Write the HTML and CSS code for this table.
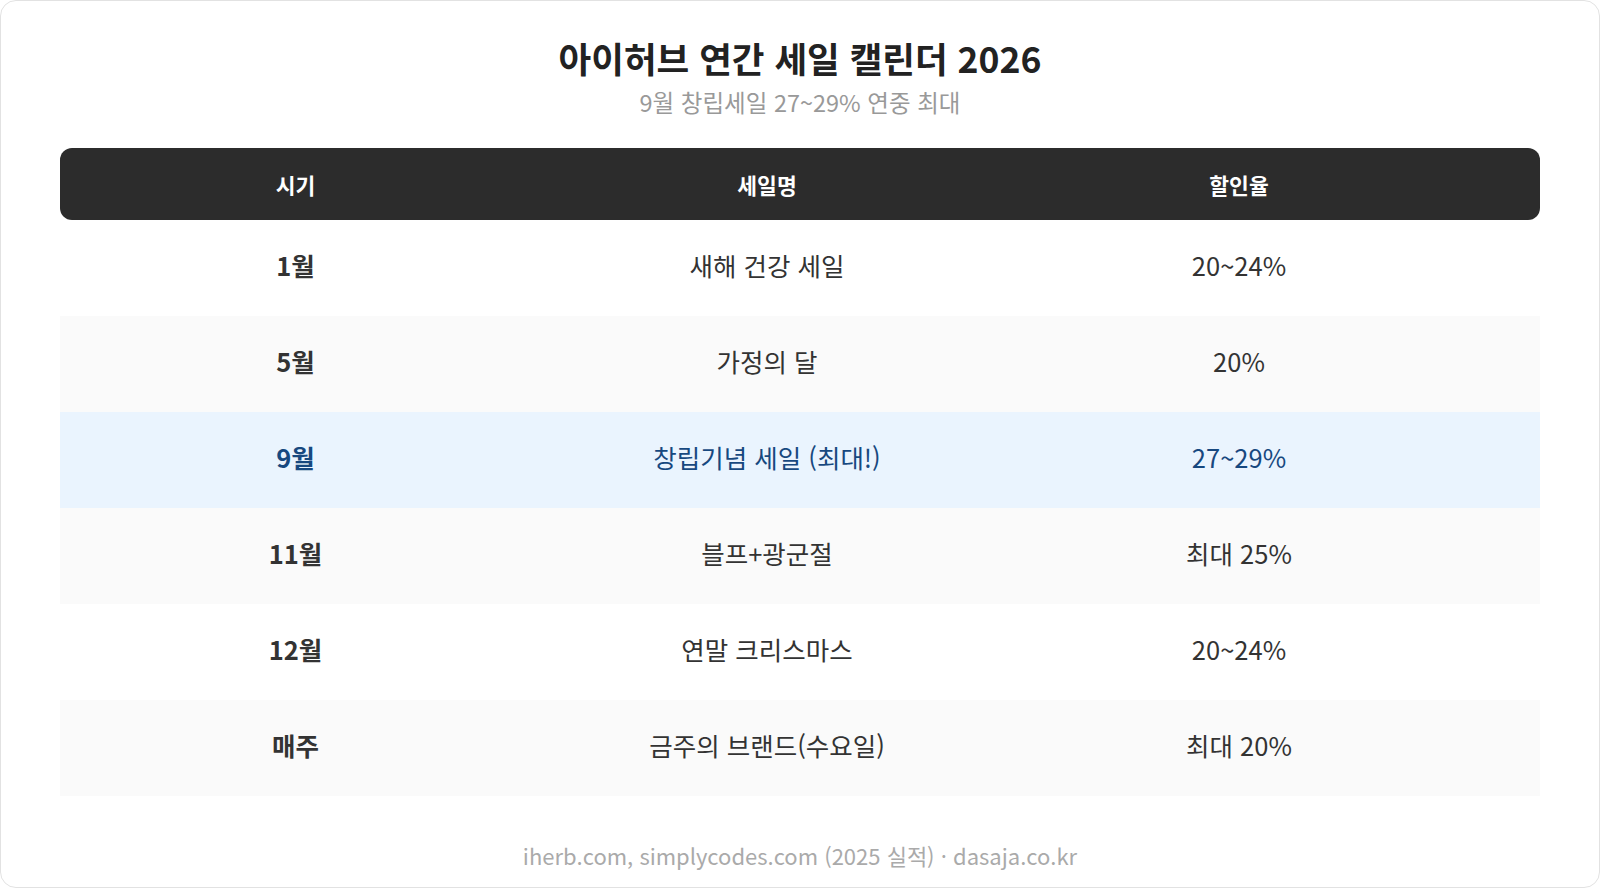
FILE: index.html
```html
<!DOCTYPE html>
<html lang="ko">
<head>
<meta charset="utf-8">
<title>아이허브 연간 세일 캘린더 2026</title>
<link rel="stylesheet" href="styles.css">
</head>
<body>
<div class="card">
  <h1 class="title">아이허브 연간 세일 캘린더 2026</h1>
  <p class="subtitle">9월 창립세일 27~29% 연중 최대</p>
  <div class="table">
    <div class="row head">
      <div class="cell">시기</div>
      <div class="cell">세일명</div>
      <div class="cell">할인율</div>
    </div>
    <div class="row">
      <div class="cell when">1월</div>
      <div class="cell">새해 건강 세일</div>
      <div class="cell">20~24%</div>
    </div>
    <div class="row alt">
      <div class="cell when">5월</div>
      <div class="cell">가정의 달</div>
      <div class="cell">20%</div>
    </div>
    <div class="row hl">
      <div class="cell when">9월</div>
      <div class="cell">창립기념 세일 (최대!)</div>
      <div class="cell">27~29%</div>
    </div>
    <div class="row alt">
      <div class="cell when">11월</div>
      <div class="cell">블프+광군절</div>
      <div class="cell">최대 25%</div>
    </div>
    <div class="row">
      <div class="cell when">12월</div>
      <div class="cell">연말 크리스마스</div>
      <div class="cell">20~24%</div>
    </div>
    <div class="row alt">
      <div class="cell when">매주</div>
      <div class="cell">금주의 브랜드(수요일)</div>
      <div class="cell">최대 20%</div>
    </div>
  </div>
  <p class="footer">iherb.com, simplycodes.com (2025 실적) · dasaja.co.kr</p>
</div>
</body>
</html>
```
FILE: styles.css
```css
html, body {
  margin: 0;
  padding: 0;
  background: #ffffff;
}
body {
  font-family: "Noto Sans CJK KR", "Noto Sans", sans-serif;
  color: #333333;
}
.card {
  box-sizing: border-box;
  width: 1600px;
  height: 888px;
  border: 1px solid #e2e2e2;
  border-radius: 16px;
  padding: 35px 59px 0 59px;
  background: #ffffff;
}
.title {
  margin: 0;
  font-size: 35.5px;
  line-height: 44px;
  font-weight: 700;
  color: #222222;
  text-align: center;
}
.subtitle {
  margin: 6px 0 0 0;
  font-size: 23.5px;
  line-height: 32px;
  color: #999999;
  text-align: center;
}
.table {
  margin-top: 30px;
  width: 1480px;
}
.row {
  display: grid;
  grid-template-columns: 471px 472px 472px;
  height: 96px;
  align-items: center;
  background: #ffffff;
}
.row.alt {
  background: #fafafa;
}
.row.hl {
  background: #eaf4fe;
  color: #17487f;
}
.row.head {
  height: 72px;
  background: #2c2c2c;
  border-radius: 12px;
  color: #ffffff;
  font-weight: 700;
}
.cell {
  text-align: center;
  font-size: 25.5px;
  line-height: 32px;
  padding-bottom: 6px;
}
.row.head .cell {
  font-size: 21.5px;
  padding-bottom: 0;
  padding-top: 2px;
}
.cell.when {
  font-weight: 700;
}
.footer {
  margin: 44px 0 0 0;
  font-size: 22px;
  line-height: 30px;
  color: #aaaaaa;
  text-align: center;
}
```
